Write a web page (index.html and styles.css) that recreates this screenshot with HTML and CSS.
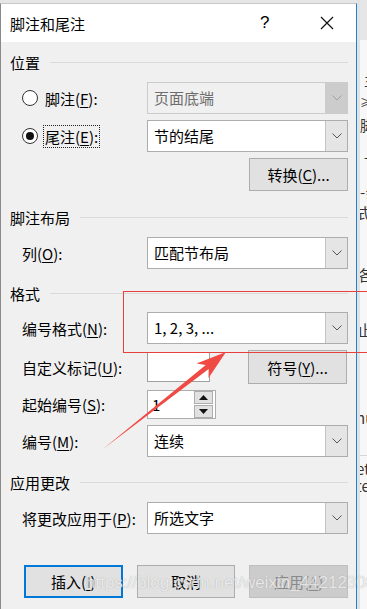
FILE: index.html
```html
<!DOCTYPE html>
<html lang="zh-CN">
  <head>
    <meta charset="UTF-8" />
    <meta name="viewport" content="width=device-width, initial-scale=1.0" />
    <title>脚注和尾注</title>
    <link rel="stylesheet" href="styles.css">
  </head>
  <body>
    <div class="screen">
      <!-- Dialog -->
      <div class="dialog">
        <div class="titlebar">
          <span class="title">脚注和尾注</span>
          <span class="help">?</span>
          <span class="close">
            <svg width="14" height="14" viewBox="0 0 14 14">
              <path d="M1 1 L13 13 M13 1 L1 13" stroke="#111" stroke-width="1.2" fill="none" />
            </svg>
          </span>
        </div>

        <div class="content">
          <div class="group-head head-pos"><span>位置</span></div>

          <div class="row row-foot">
            <div class="label radio-label">
              <span class="radio"></span>
              <span class="radio-text">脚注(<u>F</u>):</span>
            </div>
            <div class="combo disabled">
              <span class="combo-text">页面底端</span>
              <span class="combo-arrow">
                <svg width="10" height="6" viewBox="0 0 10 6"><path d="M0.5 0.5 L5 5 L9.5 0.5" stroke="#a0a0a0" fill="none" /></svg>
              </span>
            </div>
          </div>

          <div class="row row-end">
            <div class="label radio-label">
              <span class="radio checked"></span>
              <span class="radio-text focus">尾注(<u>E</u>):</span>
            </div>
            <div class="combo">
              <span class="combo-text">节的结尾</span>
              <span class="combo-arrow">
                <svg width="10" height="6" viewBox="0 0 10 6"><path d="M0.5 0.5 L5 5 L9.5 0.5" stroke="#555" fill="none" /></svg>
              </span>
            </div>
          </div>

          <div class="row row-convert">
            <button class="btn">转换(<u>C</u>)...</button>
          </div>

          <div class="group-head head-layout"><span>脚注布局</span></div>

          <div class="row row-cols">
            <div class="label">列(<u>O</u>):</div>
            <div class="combo">
              <span class="combo-text">匹配节布局</span>
              <span class="combo-arrow">
                <svg width="10" height="6" viewBox="0 0 10 6"><path d="M0.5 0.5 L5 5 L9.5 0.5" stroke="#555" fill="none" /></svg>
              </span>
            </div>
          </div>

          <div class="group-head head-format"><span>格式</span></div>

          <div class="row row-numfmt">
            <div class="label">编号格式(<u>N</u>):</div>
            <div class="combo">
              <span class="combo-text">1, 2, 3, ...</span>
              <span class="combo-arrow">
                <svg width="10" height="6" viewBox="0 0 10 6"><path d="M0.5 0.5 L5 5 L9.5 0.5" stroke="#555" fill="none" /></svg>
              </span>
            </div>
          </div>

          <div class="row row-custom">
            <div class="label">自定义标记(<u>U</u>):</div>
            <div class="textbox"></div>
            <button class="btn btn-symbol">符号(<u>Y</u>)...</button>
          </div>

          <div class="row row-start">
            <div class="label">起始编号(<u>S</u>):</div>
            <div class="spin">
              <span class="spin-text">1</span>
              <span class="spin-btns">
                <span class="spin-btn"><svg width="9" height="5" viewBox="0 0 9 5"><path d="M0 5 L4.5 0 L9 5 Z" fill="#111" /></svg></span>
                <span class="spin-btn"><svg width="9" height="5" viewBox="0 0 9 5"><path d="M0 0 L4.5 5 L9 0 Z" fill="#111" /></svg></span>
              </span>
            </div>
          </div>

          <div class="row row-numbering">
            <div class="label">编号(<u>M</u>):</div>
            <div class="combo">
              <span class="combo-text">连续</span>
              <span class="combo-arrow">
                <svg width="10" height="6" viewBox="0 0 10 6"><path d="M0.5 0.5 L5 5 L9.5 0.5" stroke="#555" fill="none" /></svg>
              </span>
            </div>
          </div>

          <div class="group-head head-apply"><span>应用更改</span></div>

          <div class="row row-apply">
            <div class="label">将更改应用于(<u>P</u>):</div>
            <div class="combo">
              <span class="combo-text">所选文字</span>
              <span class="combo-arrow">
                <svg width="10" height="6" viewBox="0 0 10 6"><path d="M0.5 0.5 L5 5 L9.5 0.5" stroke="#555" fill="none" /></svg>
              </span>
            </div>
          </div>

          <div class="footer-btns">
            <button class="btn btn-default">插入(<u>I</u>)</button>
            <button class="btn">取消</button>
            <button class="btn btn-disabled">应用(<u>A</u>)</button>
          </div>
        </div>
      </div>

      <!-- Document behind the dialog -->
      <div class="backdrop">
        <div class="bd-top"></div>
        <div class="bd-line l1">兰</div>
        <div class="bd-line l2">≥</div>
        <div class="bd-line l3">脚</div>
        <div class="bd-line l4">+</div>
        <div class="bd-line l5">-亲</div>
        <div class="bd-line l6">式</div>
        <div class="bd-line l7">各</div>
        <div class="bd-line l8">止</div>
        <div class="bd-line l9">nu</div>
        <div class="bd-rule"></div>
        <div class="bd-line l10">et</div>
        <div class="bd-line l11">te</div>
      </div>

      <!-- Annotation -->
      <div class="mark-box"></div>
      <svg class="mark-arrow" width="367" height="609" viewBox="0 0 367 609">
        <polygon points="226,352 208.5,378 208.7,368.9 103,449 205.7,365 196.5,363.5" fill="#f04a45" />
      </svg>
      <div class="watermark">https://blog.csdn.net/weixin_44212308</div>
    </div>
  </body>
</html>
```

FILE: styles.css
```css
body {
  margin: 0;
  padding: 0;
  background: #ffffff;
  font-family: "Noto Sans CJK SC", "Microsoft YaHei", sans-serif;
  font-size: 15px;
  color: #000;
}

.screen {
  position: relative;
  display: flex;
  width: 367px;
  height: 609px;
  overflow: hidden;
  background: #e6e6e6;
}

/* Dialog */
.dialog {
  width: 355px;
  height: 605px;
  margin-top: 3px;
  border-left: 1px solid #8a8a8a;
  border-top: 1px solid #c8c8c8;
  border-right: 1px solid #1883d7;
  background: #f0f0f0;
  flex-shrink: 0;
}

.titlebar {
  display: flex;
  align-items: center;
  height: 38px;
  background: #fff;
  padding-left: 9px;
}

.title {
  flex: 1;
  font-size: 15px;
}

.help {
  width: 20px;
  margin-right: 40px;
  font-family: "Liberation Sans", sans-serif;
  font-size: 17px;
}

.close {
  display: flex;
  width: 14px;
  margin-right: 22px;
}

.content {
  padding: 10px 8px 0 9px;
}

/* Group headings */
.group-head {
  display: flex;
  align-items: center;
  height: 20px;
}

.group-head::after {
  content: "";
  flex: 1;
  height: 1px;
  margin-left: 10px;
  background: #dadada;
}

.head-layout { margin-top: 16px; }
.head-format { margin-top: 14px; }
.head-apply { margin-top: 15px; }

/* Rows */
.row {
  display: flex;
  align-items: center;
  height: 32px;
  padding-left: 12px;
}

.row-foot { margin-top: 10px; }
.row-end { margin-top: 6px; }
.row-convert {
  margin-top: 6px;
  height: 33px;
  justify-content: flex-end;
}
.row-cols { margin-top: 10px; }
.row-numfmt { margin-top: 9px; }
.row-custom { margin-top: 6px; height: 34px; }
.row-start { margin-top: 6px; height: 29px; }
.row-numbering { margin-top: 6px; }
.row-apply { margin-top: 10px; }

.label {
  width: 125px;
  flex-shrink: 0;
  white-space: nowrap;
}

u {
  text-decoration: underline;
  text-underline-offset: 2px;
}

/* Radio */
.radio-label {
  display: flex;
  align-items: center;
}

.radio {
  position: relative;
  width: 14px;
  height: 14px;
  border: 1px solid #333;
  border-radius: 50%;
  background: #fff;
  margin-right: 5px;
}

.radio.checked::after {
  content: "";
  position: absolute;
  left: 3px;
  top: 3px;
  width: 8px;
  height: 8px;
  border-radius: 50%;
  background: #111;
}

.radio-text {
  padding: 0 1px;
  border: 1px solid transparent;
  line-height: 21px;
}

.radio-text.focus {
  border: 1px dotted #222;
}

/* Combo boxes */
.combo {
  display: flex;
  width: 201px;
  height: 32px;
  box-sizing: border-box;
  border: 1px solid #adadad;
  background: #fff;
}

.combo-text {
  flex: 1;
  padding-left: 6px;
  line-height: 30px;
  font-size: 15px;
}

.combo-arrow {
  display: flex;
  align-items: center;
  justify-content: center;
  width: 21px;
  border-left: 1px solid #c4c4c4;
  background: #e5e5e5;
}

.combo.disabled {
  background: #f0f0f0;
  border-color: #cccccc;
  color: #6d6d6d;
}

.combo.disabled .combo-arrow {
  background: #cccccc;
  border-left-color: #cccccc;
}

/* Text box + spin */
.textbox {
  width: 63px;
  height: 30px;
  box-sizing: border-box;
  border: 1px solid #a0a0a0;
  background: #fff;
}

.spin {
  display: flex;
  align-items: center;
  width: 69px;
  height: 29px;
  box-sizing: border-box;
  border: 1px solid #adadad;
  background: #fff;
}

.spin-text {
  flex: 1;
  padding-left: 4px;
}

.spin-btns {
  display: flex;
  flex-direction: column;
  gap: 1px;
  margin-right: 2px;
}

.spin-btn {
  display: flex;
  align-items: center;
  justify-content: center;
  width: 17px;
  height: 11px;
  border: 1px solid #adadad;
  background: #e1e1e1;
}

/* Buttons */
.btn {
  width: 99px;
  height: 33px;
  box-sizing: border-box;
  border: 1px solid #adadad;
  background: #e1e1e1;
  font-family: inherit;
  font-size: 15px;
  color: #000;
  padding: 0;
}

.btn-symbol {
  margin-left: 38px;
  height: 34px;
}

.footer-btns {
  display: flex;
  gap: 14px;
  margin-top: 31px;
  padding-left: 14px;
}

.btn-default {
  border: 2px solid #0078d7;
}

.btn-disabled {
  background: #cccccc;
  border-color: #bfbfbf;
  color: #8a8a8a;
}

/* Document behind */
.backdrop {
  flex: 1;
  background: #f7f7f7;
  border-left: 3px solid #e2e2e2;
  overflow: hidden;
  font-size: 15px;
  color: #333;
  white-space: nowrap;
}

.bd-top {
  height: 40px;
  background: #e6e6e6;
}

.bd-line {
  height: 16px;
  line-height: 16px;
}

.bd-rule {
  height: 1px;
  margin-top: 29px;
  background: #d6d6d6;
}

.l1 { margin-top: 32px; margin-left: 4px; }
.l2 { margin-top: 6px; font-size: 11px; }
.l3 { margin-top: 7px; }
.l4 { margin-top: 17px; margin-left: 4px; }
.l5 { margin-top: 18px; }
.l6 { margin-top: 5px; margin-left: -4px; }
.l7 { margin-top: 46px; margin-left: -2px; }
.l8 { margin-top: 39px; margin-left: -3px; }
.l9 { margin-top: 72px; margin-left: -4px; }
.l10 { margin-top: 5px; margin-left: -4px; }
.l11 { margin-top: 1px; margin-left: -4px; }

/* Annotation */
.mark-box {
  position: absolute;
  left: 123px;
  top: 291px;
  width: 260px;
  height: 60px;
  border: 1px solid #e8403c;
}

.mark-arrow {
  position: absolute;
  left: 0;
  top: 0;
}

.watermark {
  position: absolute;
  left: 86px;
  top: 573px;
  font-family: "Liberation Sans", sans-serif;
  font-size: 17px;
  color: rgba(255, 255, 255, 0.75);
  text-shadow: 0 0 1px rgba(120, 120, 120, 0.6);
  white-space: nowrap;
}
```
